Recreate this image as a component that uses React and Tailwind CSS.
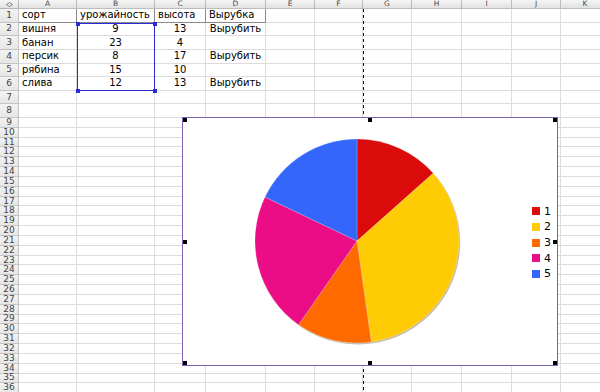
import React from "react";

const cols = [
  { l: "A", w: "w-[58px]" },
  { l: "B", w: "w-[78px]" },
  { l: "C", w: "w-[51px]" },
  { l: "D", w: "w-[60px]" },
  { l: "E", w: "w-[49px]" },
  { l: "F", w: "w-[48px]" },
  { l: "G", w: "w-[49px]" },
  { l: "H", w: "w-[50px]" },
  { l: "I", w: "w-[50px]" },
  { l: "J", w: "w-[49px]" },
  { l: "K", w: "w-[49px]" },
];

const data = [
  ["сорт", "урожайность", "высота", "Вырубка"],
  ["вишня", "9", "13", "Вырубить"],
  ["банан", "23", "4", ""],
  ["персик", "8", "17", "Вырубить"],
  ["рябина", "15", "10", ""],
  ["слива", "12", "13", "Вырубить"],
];

const values = [9, 23, 8, 15, 12];
const colors = ["#dc0b0b", "#ffcb05", "#ff6a00", "#ea0d86", "#3466fb"];

function piePaths(cx, cy, r) {
  const total = values.reduce((a, b) => a + b, 0);
  let a0 = 0;
  return values.map((v, i) => {
    const a1 = a0 + (v / total) * Math.PI * 2;
    const x0 = cx + r * Math.sin(a0);
    const y0 = cy - r * Math.cos(a0);
    const x1 = cx + r * Math.sin(a1);
    const y1 = cy - r * Math.cos(a1);
    const large = a1 - a0 > Math.PI ? 1 : 0;
    const d = `M${cx},${cy} L${x0},${y0} A${r},${r} 0 ${large} 1 ${x1},${y1} Z`;
    a0 = a1;
    return { d, c: colors[i] };
  });
}

function Handle({ cls }) {
  return <div className={`absolute w-[4px] h-[4px] bg-black ${cls}`} />;
}

function BlueHandle({ cls }) {
  return <div className={`absolute w-[4px] h-[4px] bg-[#2a2ad8] ${cls}`} />;
}

export default function App() {
  const rows = [];
  for (let r = 1; r <= 36; r++) rows.push(r);
  const paths = piePaths(103, 103, 102);

  return (
    <div
      className="relative w-[600px] h-[392px] overflow-hidden bg-white text-black"
      style={{ fontFamily: '"DejaVu Sans", Verdana, sans-serif' }}
    >
      {/* column header */}
      <div className="flex h-[9px]">
        <div className="w-[19px] h-[9px] shrink-0 flex items-center justify-center border-r border-b border-[#b5b5b5] bg-gradient-to-b from-[#f6f6f6] to-[#e2e2e2]">
          <svg width="7" height="5" viewBox="0 0 7 5">
            <polygon points="3.5,0.5 6.5,2.5 3.5,4.5 0.5,2.5" fill="none" stroke="#666" strokeWidth="0.8" />
          </svg>
        </div>
        {cols.map((c) => (
          <div
            key={c.l}
            className={`${c.w} shrink-0 h-[9px] flex items-center justify-center border-r border-b border-[#bdbdbd] bg-gradient-to-b from-[#f6f6f6] to-[#e2e2e2] text-[7.5px] leading-none text-[#4a4a4a]`}
          >
            {c.l}
          </div>
        ))}
      </div>

      {rows.map((r) => {
        const h = r <= 8 ? "h-[13.625px]" : "h-[9.83px]";
        const rowData = data[r - 1];
        return (
          <div key={r} className={`flex ${h}`}>
            <div
              className={`w-[19px] shrink-0 ${h} flex items-center justify-center border-r border-b border-[#c4c4c4] bg-gradient-to-b from-[#f3f3f3] to-[#e6e6e6] text-[9px] leading-none text-[#444]`}
            >
              {r}
            </div>
            {cols.map((c, ci) => {
              const txt = rowData ? rowData[ci] : undefined;
              const header = r === 1 && ci < 4;
              const border = header ? "border-[#8a8a8a]" : "border-[#dcdcdc]";
              let align = "justify-start pl-[3px]";
              if (r > 1 && (ci === 1 || ci === 2 || ci === 3)) align = "justify-center";
              return (
                <div
                  key={c.l}
                  className={`${c.w} shrink-0 ${h} flex items-center ${align} border-r border-b ${border} text-[10px] leading-none whitespace-nowrap overflow-visible`}
                >
                  {txt}
                </div>
              );
            })}
          </div>
        );
      })}

      {/* page break line */}
      <div className="absolute left-[363px] top-[9px] bottom-0 w-px bg-[repeating-linear-gradient(to_bottom,#111_0_3px,transparent_3px_6px)]" />

      {/* selection B2:B6 */}
      <div className="absolute left-[77px] top-[23px] w-[78px] h-[68px] border border-[#2a2ad8]">
        <BlueHandle cls="-left-[2.5px] -top-[2.5px]" />
        <BlueHandle cls="-right-[2.5px] -top-[2.5px]" />
        <BlueHandle cls="-left-[2.5px] -bottom-[2.5px]" />
        <BlueHandle cls="-right-[2.5px] -bottom-[2.5px]" />
      </div>

      {/* chart */}
      <div className="absolute left-[182px] top-[117px] w-[376px] h-[249px] bg-white border border-[#7e62ad] flex items-center">
        <Handle cls="left-0 top-0" />
        <Handle cls="left-[185px] top-0" />
        <Handle cls="right-0 top-0" />
        <Handle cls="left-0 top-[122px]" />
        <Handle cls="right-0 top-[122px]" />
        <Handle cls="left-0 bottom-0" />
        <Handle cls="left-[185px] bottom-0" />
        <Handle cls="right-0 bottom-0" />

        <svg width="208" height="208" viewBox="0 0 208 208" className="ml-[71px] shrink-0">
          <circle cx="104" cy="104.3" r="102.2" fill="#b9ad98" opacity="0.8" />
          {paths.map((p, i) => (
            <path key={i} d={p.d} fill={p.c} stroke="#ffffff" strokeOpacity="0.35" strokeWidth="0.6" />
          ))}
        </svg>

        <div className="ml-[70px] flex flex-col gap-[7.7px] mt-[2px]">
          {values.map((v, i) => (
            <div key={i} className="flex items-center gap-[4px] h-[8px]">
              <div className="w-[8px] h-[8px]" style={{ backgroundColor: colors[i] }} />
              <span className="text-[11px] leading-none">{i + 1}</span>
            </div>
          ))}
        </div>
      </div>
    </div>
  );
}
